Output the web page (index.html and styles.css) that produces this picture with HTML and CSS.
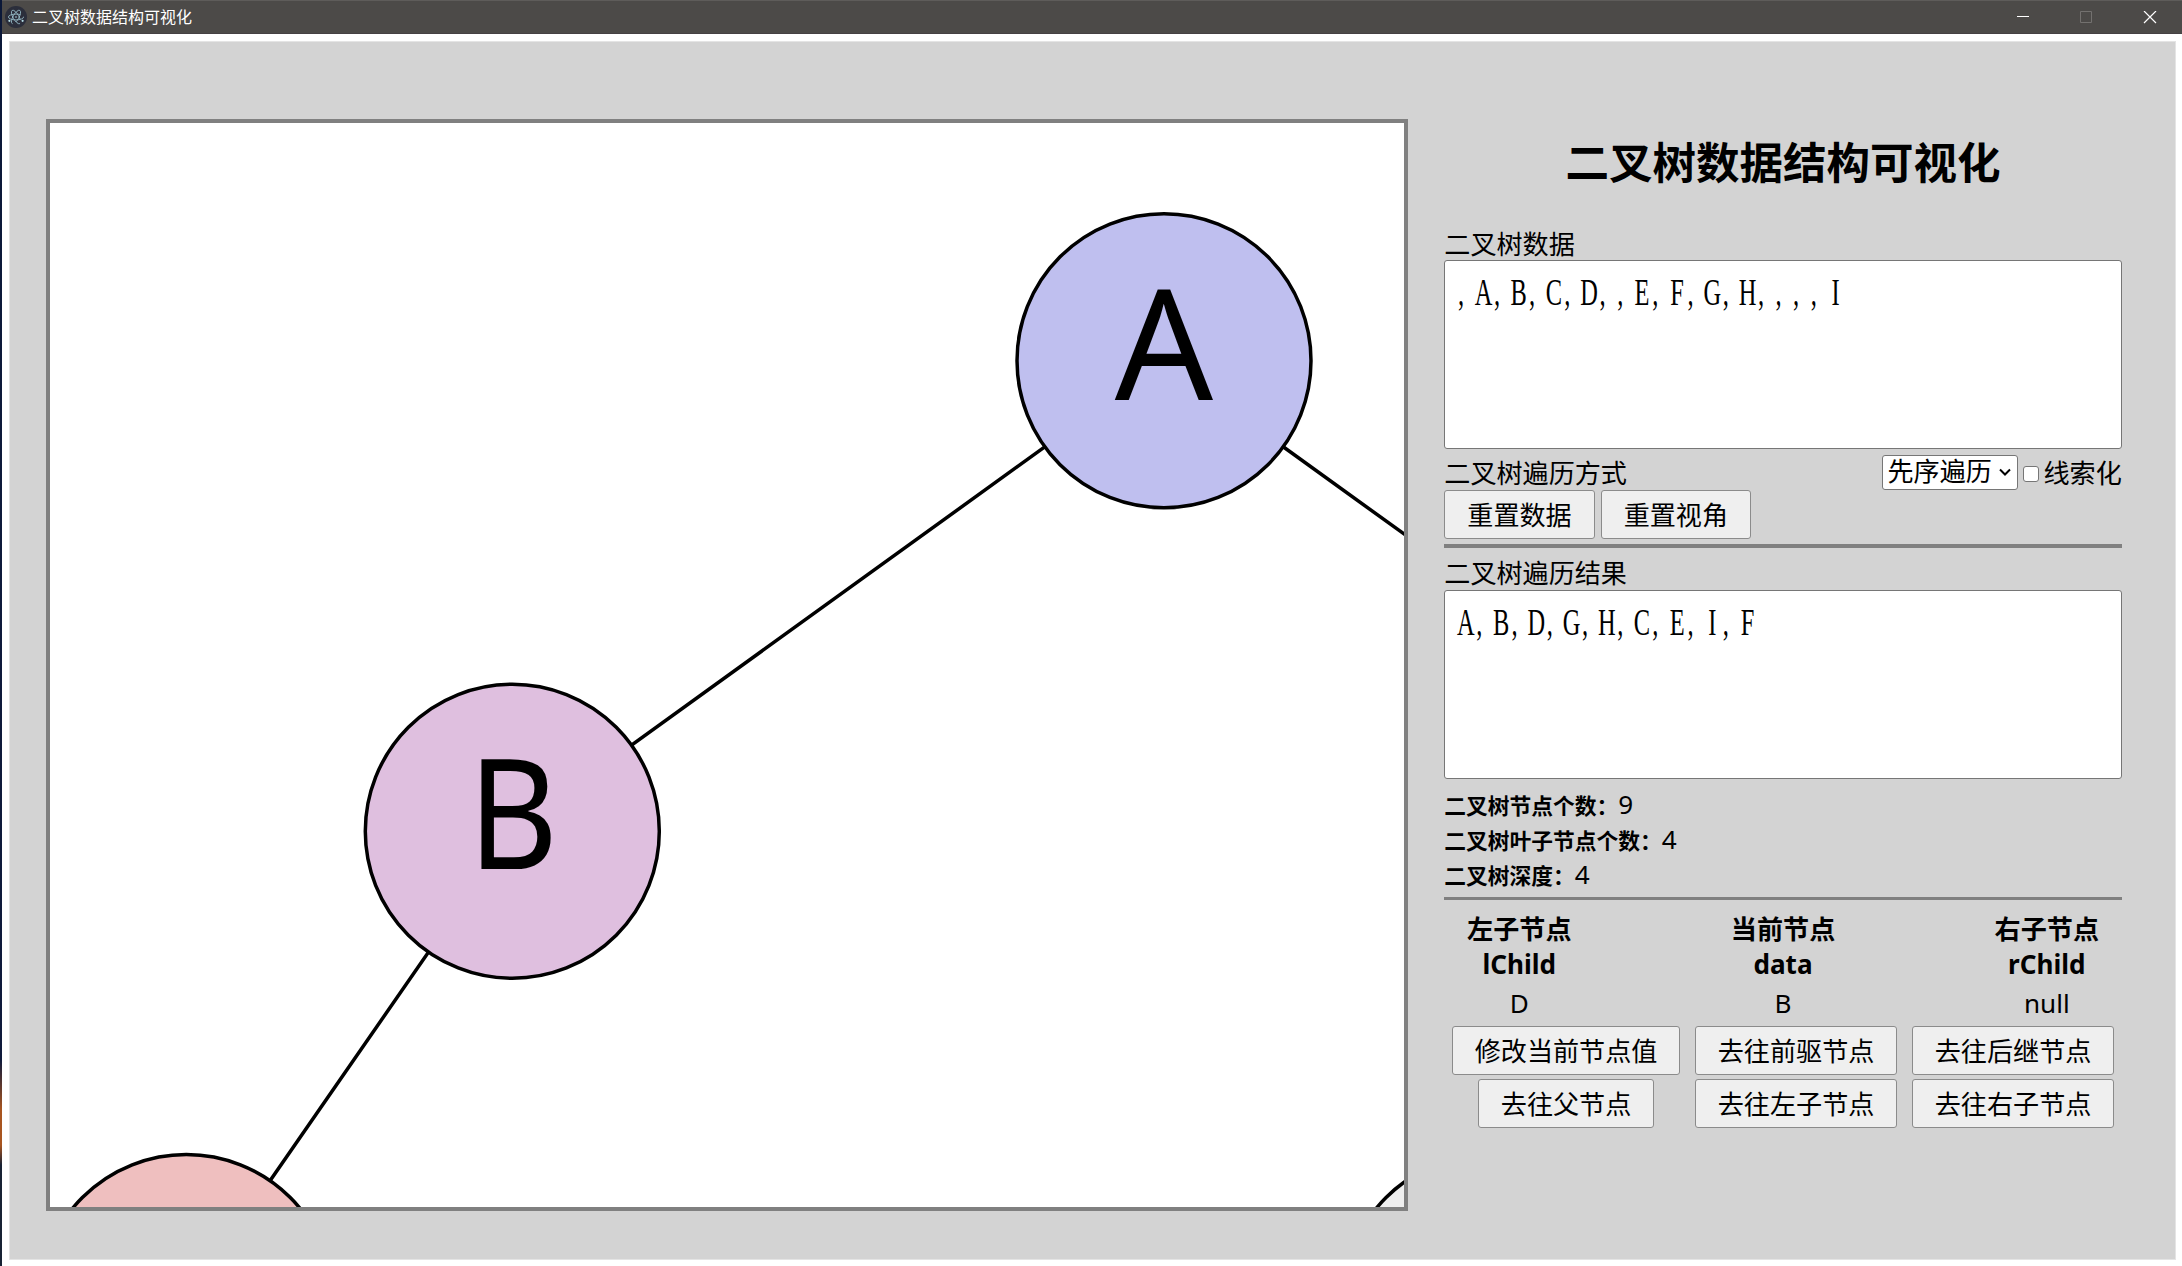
FILE: index.html
```html
<!DOCTYPE html>
<html lang="zh-CN">
<head>
<meta charset="utf-8">
<title>二叉树数据结构可视化</title>
<link rel="stylesheet" href="styles.css">
</head>
<body>
<div class="window">
  <header class="titlebar">
    <svg class="app-icon" viewBox="0 0 22 22">
      <circle cx="11" cy="11" r="11" fill="#2b2e3b"/>
      <g fill="none" stroke="#9ac0cc" stroke-width=".8">
        <ellipse cx="11" cy="11" rx="7.6" ry="2.9" stroke-dasharray="30 4"/>
        <ellipse cx="11" cy="11" rx="7.6" ry="2.9" transform="rotate(60 11 11)" stroke-dasharray="30 4"/>
        <ellipse cx="11" cy="11" rx="7.6" ry="2.9" transform="rotate(120 11 11)" stroke-dasharray="30 4"/>
      </g>
      <g fill="#b5dce6"><circle cx="11" cy="11" r=".8"/><circle cx="4.4" cy="14.8" r="1.1"/><circle cx="17.6" cy="14.8" r="1.1"/></g>
    </svg>
    <span class="caption">二叉树数据结构可视化</span>
    <svg class="controls" viewBox="0 0 140 13" fill="none">
      <path d="M0 5.500H12" stroke="#fff"/>
      <path d="M63.500 .5H74.500V11.500H63.500Z" stroke="#73716f"/>
      <path d="M127 0L139 12M139 0L127 12" stroke="#fff" stroke-width="1.2"/>
    </svg>
  </header>
  <main class="app">
    <svg class="tree" viewBox="50 122.500 1354 1083.500">
      <g class="edges">
        <path d="M1164 360.300L512.300 830.700L186.300 1301"/>
        <path d="M1164 360.300L1816 830.700L1490 1301"/>
      </g>
      <g class="nodes">
        <circle cx="1164" cy="360.300" r="147" fill="#bfbfef"/>
        <circle cx="512.300" cy="830.700" r="147" fill="#dfbfdf"/>
        <circle cx="186.300" cy="1301" r="147" fill="#efbfbf"/>
        <circle cx="1490" cy="1301" r="147" fill="#efefef"/>
      </g>
      <text class="node-name" x="1164" y="399">A</text>
      <text class="node-name" transform="translate(513 868.700) scale(.9 1)">B</text>
    </svg>
    <section class="side">
      <h1>二叉树数据结构可视化</h1>
      <div class="label data-label">二叉树数据</div>
      <div class="field">
        <svg class="field-text" viewBox="0 0 674 186"><text transform="scale(.66 1)" y="44" x="24.500 58.300 78.800 111.700 132.100 165 185.500 218.300 238.800 265.500 298.300 318.800 351.700 372.100 405 425.500 458.300 478.800 505.500 532.100 558.800 591.700">,A,B,C,D,,E,F,G,H,,,,I</text></svg>
      </div>
      <div class="options">
        <span class="label">二叉树遍历方式</span>
        <span class="spacer"></span>
        <div class="select">先序遍历<svg viewBox="0 0 12 8"><path d="M1 1.500L6 6.500L11 1.500" fill="none" stroke="#000" stroke-width="2"/></svg></div>
        <span class="check"></span>
        <span class="label">线索化</span>
      </div>
      <div class="actions"><button>重置数据</button><button>重置视角</button></div>
      <div class="rule"></div>
      <div class="label result-label">二叉树遍历结果</div>
      <div class="field">
        <svg class="field-text" viewBox="0 0 674 186"><text transform="scale(.66 1)" y="44" x="31.700 52.100 85 105.500 138.300 158.800 191.700 212.100 245 265.500 298.300 318.800 351.700 372.100 405 425.500 458.300">A,B,D,G,H,C,E,I,F</text></svg>
      </div>
      <div class="stats">
        <div><b>二叉树节点个数：</b>9</div>
        <div><b>二叉树叶子节点个数：</b>4</div>
        <div><b>二叉树深度：</b>4</div>
      </div>
      <div class="rule"></div>
      <div class="node-info">
        <div><b>左子节点<br>lChild</b><span>D</span></div>
        <div><b>当前节点<br>data</b><span>B</span></div>
        <div><b>右子节点<br>rChild</b><span>null</span></div>
      </div>
      <div class="moves">
        <button>修改当前节点值</button><button>去往前驱节点</button><button>去往后继节点</button>
        <button>去往父节点</button><button>去往左子节点</button><button>去往右子节点</button>
      </div>
    </section>
  </main>
</div>
</body>
</html>
```
FILE: styles.css
```css
* { box-sizing: border-box; }
body {
  margin: 0;
  width: 2182px;
  height: 1266px;
  overflow: hidden;
  color: #000;
  font: 26.1px/35px "Noto Sans", "Noto Sans CJK SC", sans-serif;
  background: linear-gradient(#0b1838 0, #101b3c 1060px, #a85520 1110px, #a85520 1145px, #182234 1165px, #182234);
}
.window {
  display: flex;
  flex-direction: column;
  height: 1266px;
  margin-left: 2px;
  background: #fff;
}
.titlebar {
  display: flex;
  align-items: center;
  height: 34px;
  flex: none;
  padding: 0 25px 0 3px;
  background: #4c4a48;
  border-top: 1px solid #5e5c5a;
  border-bottom: 1px solid #454143;
  color: #fff;
}
.app-icon { width: 22px; height: 22px; }
.caption { margin-left: 5px; font-size: 16px; line-height: 30px; flex: 1; }
.controls { width: 140px; height: 13px; }
.app {
  display: flex;
  flex: none;
  width: 2167px;
  height: 1219px;
  margin: 7px 0 0 7px;
  padding: 77px 53px 0 35.800px;
  background: #d3d3d3;
  border: 1px solid #e4e4e4;
}
.tree {
  flex: none;
  width: 1362px;
  height: 1091.500px;
  background: #fff;
  border: 4px solid gray;
}
.edges { fill: none; stroke: #000; stroke-width: 3.500px; }
.nodes { stroke: #000; stroke-width: 3.500px; }
.node-name { font: 154px "Noto Sans", sans-serif; text-anchor: middle; }
.side {
  display: flex;
  flex-direction: column;
  flex: none;
  width: 677.500px;
  margin-left: 36.500px;
}
h1 {
  margin: 14px 0 36px;
  font-size: 43.500px;
  line-height: 58px;
  text-align: center;
  white-space: nowrap;
}
.label { height: 35px; white-space: nowrap; }
.data-label { height: 33px; }
.field {
  height: 189px;
  flex: none;
  background: #fff;
  border: 1px solid #767676;
  border-radius: 3px;
  margin-bottom: 6px;
}
.field-text { display: block; width: 674px; height: 186px; }
.field-text text { font: 37px "Liberation Serif", serif; text-anchor: middle; }
.options { display: flex; height: 35px; align-items: flex-start; }
.options .label { padding-top: 1px; }
.spacer { flex: 1; }
.select {
  display: flex;
  align-items: center;
  width: 136px;
  height: 35px;
  padding: 0 6px 2px 5px;
  background: #fff;
  border: 1px solid #767676;
  border-radius: 3px;
  white-space: nowrap;
}
.select svg { width: 12px; height: 8px; margin-left: auto; }
.check {
  width: 16px;
  height: 16px;
  margin: 11px 5px 0;
  background: #fff;
  border: 1px solid #767676;
  border-radius: 3px;
}
button {
  height: 49px;
  padding: 2px 22px 0;
  border: 1px solid #8b8b8b;
  border-radius: 3px;
  background: #efefef;
  color: #000;
  font: inherit;
  white-space: nowrap;
}
.actions { display: flex; gap: 6px; }
.rule { flex: none; height: 3.500px; margin-top: 5px; background: gray; }
.result-label { margin-top: 7.500px; height: 35px; padding-top: 1px; }
.stats { padding-top: 1.500px; }
.stats div { height: 35px; }
.stats b { font-size: 21.760px; }
.node-info { display: flex; justify-content: space-between; margin-top: 11.500px; }
.node-info div { width: 150px; text-align: center; }
.node-info b { display: block; height: 70px; }
.node-info span { display: block; height: 35px; margin-top: 4px; }
.moves {
  display: grid;
  grid-template-columns: 228px 202px 202px;
  column-gap: 15px;
  row-gap: 4px;
  justify-content: center;
  justify-items: center;
  margin-top: 5px;
}
```
